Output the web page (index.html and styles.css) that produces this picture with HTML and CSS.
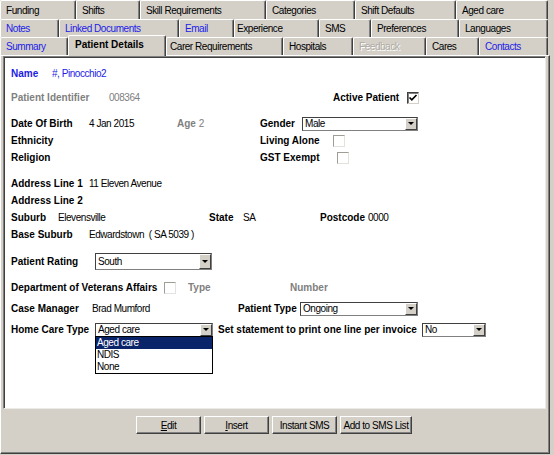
FILE: index.html
```html
<!DOCTYPE html>
<html>
	<head>
		<meta charset="UTF-8">
		<title>Patient Details</title>
		<link rel="stylesheet" href="styles.css">
	</head>
	<body>
		<div class="tabctl">
			<div class="tabrow first">
				<div class="tab t-funding">Funding</div>
				<div class="tab t-shifts">Shifts</div>
				<div class="tab t-skills">Skill Requirements</div>
				<div class="tab t-categories">Categories</div>
				<div class="tab t-shiftdef">Shift Defaults</div>
				<div class="tab t-aged">Aged care</div>
			</div>
			<div class="tabrow">
				<div class="tab link t-notes">Notes</div>
				<div class="tab link t-docs">Linked Documents</div>
				<div class="tab link t-email">Email</div>
				<div class="tab t-experience">Experience</div>
				<div class="tab t-sms">SMS</div>
				<div class="tab t-prefs">Preferences</div>
				<div class="tab t-langs">Languages</div>
			</div>
			<div class="tabrow">
				<div class="tab link t-summary">Summary</div>
				<div class="tab active t-details">Patient Details</div>
				<div class="tab t-carer">Carer Requirements</div>
				<div class="tab t-hospitals">Hospitals</div>
				<div class="tab off t-feedback">Feedback</div>
				<div class="tab t-cares">Cares</div>
				<div class="tab link t-contacts">Contacts</div>
			</div>

			<div class="page">
				<div class="sheet">
					<div class="row">
						<span class="lbl link w-name">Name</span>
						<span class="val link">#, Pinocchio2</span>
					</div>
					<div class="row r-pi">
						<span class="lbl dim w-pi">Patient Identifier</span>
						<span class="val dim w-pival">008364</span>
						<span class="lbl w-active">Active Patient</span>
						<span class="cb on">
							<svg width="10" height="10" viewBox="0 0 10 10"><polyline points="1.5,4.5 3.8,6.8 8.5,2" fill="none" stroke="#000" stroke-width="1.7"/></svg>
						</span>
					</div>
					<div class="row spaced">
						<span class="lbl w-key">Date Of Birth</span>
						<span class="val w-dob">4 Jan 2015</span>
						<span class="dim w-age"><b>Age</b> <span class="val">2</span></span>
						<span class="lbl w-gender">Gender</span>
						<div class="combo c-gender"><span class="combo-text">Male</span><span class="drop"></span></div>
					</div>
					<div class="row">
						<span class="lbl w-left">Ethnicity</span>
						<span class="lbl w-living">Living Alone</span>
						<span class="cb"></span>
					</div>
					<div class="row">
						<span class="lbl w-left">Religion</span>
						<span class="lbl w-gst">GST Exempt</span>
						<span class="cb"></span>
					</div>

					<div class="row spaced">
						<span class="lbl w-key">Address Line 1</span>
						<span class="val">11 Eleven Avenue</span>
					</div>
					<div class="row">
						<span class="lbl w-key">Address Line 2</span>
					</div>
					<div class="row">
						<span class="lbl w-suburb">Suburb</span>
						<span class="val w-subval">Elevensville</span>
						<span class="lbl w-state">State</span>
						<span class="val w-stateval">SA</span>
						<span class="lbl w-pc">Postcode</span>
						<span class="val">0000</span>
					</div>
					<div class="row">
						<span class="lbl w-key">Base Suburb</span>
						<span class="val">Edwardstown&nbsp; ( SA 5039 )</span>
					</div>

					<div class="row spaced tall">
						<span class="lbl w-key2">Patient Rating</span>
						<div class="combo c-rating"><span class="combo-text">South</span><span class="drop"></span></div>
					</div>
					<div class="row spaced">
						<span class="lbl w-dva">Department of Veterans Affairs</span>
						<span class="cb"></span>
						<span class="lbl dim w-type">Type</span>
						<span class="lbl dim">Number</span>
					</div>
					<div class="row near">
						<span class="lbl w-case">Case Manager</span>
						<span class="val w-caseval">Brad Mumford</span>
						<span class="lbl w-ptype">Patient Type</span>
						<div class="combo c-ptype"><span class="combo-text">Ongoing</span><span class="drop"></span></div>
					</div>
					<div class="row near">
						<span class="lbl w-key2">Home Care Type</span>
						<div class="combo c-home">
							<span class="combo-text">Aged care</span><span class="drop"></span>
							<ul class="droplist">
								<li class="sel">Aged care</li>
								<li>NDIS</li>
								<li>None</li>
							</ul>
						</div>
						<span class="lbl w-stmt">Set statement to print one line per invoice</span>
						<div class="combo c-stmt"><span class="combo-text">No</span><span class="drop"></span></div>
					</div>
				</div>

				<div class="buttons">
					<button class="btn"><u>E</u>dit</button>
					<button class="btn"><u>I</u>nsert</button>
					<button class="btn">Instant SMS</button>
					<button class="btn b-wide">Add to SMS List</button>
				</div>
			</div>
		</div>
	</body>
</html>
```

FILE: styles.css
```css
body {
	margin: 0;
	background: #d4d0c8;
	font-family: "Liberation Sans", Arial, sans-serif;
	font-size: 10px;
	color: #000;
}

.tabctl {
	width: 550px;
}

/* tab strip, three rows */
.tabrow {
	display: flex;
	height: 18px;
}
.tabrow.first {
	height: 19px;
}

.tab {
	box-sizing: border-box;
	flex: none;
	height: 100%;
	padding: 2px 0 0 5px;
	line-height: 14px;
	background: #d4d0c8;
	border-top: 1px solid #fff;
	border-left: 1px solid #fff;
	border-right: 1px solid #404040;
	box-shadow: inset -1px 0 0 #808080;
	border-radius: 2px 2px 0 0;
	letter-spacing: -0.45px;
	white-space: nowrap;
}
.tabrow.first .tab {
	padding-top: 3px;
}
.tab.link {
	color: #1c1ce6;
}
.tab.off {
	color: #aeaba4;
	text-shadow: 1px 1px 0 #fff;
}
.tab.active {
	position: relative;
	z-index: 1;
	height: 21px;
	margin-top: -2px;
	padding-left: 6px;
	font-weight: bold;
	letter-spacing: 0;
}

.t-funding { width: 76px; }
.t-shifts { width: 64px; }
.t-skills { width: 126px; }
.t-categories { width: 89px; }
.t-shiftdef { width: 101px; }
.t-aged { width: 92px; }

.t-notes { width: 59px; }
.t-docs { width: 120px; }
.t-email { width: 55px; }
.t-experience { width: 85px; padding-left: 2px; }
.t-sms { width: 52px; }
.t-prefs { width: 88px; }
.t-langs { width: 89px; }

.t-summary { width: 68px; }
.t-details { width: 98px; }
.t-carer { width: 117px; padding-left: 3px; }
.t-hospitals { width: 70px; }
.t-feedback { width: 73px; }
.t-cares { width: 53px; }
.t-contacts { width: 69px; }

/* page under the tabs */
.page {
	box-sizing: border-box;
	width: 550px;
	height: 399px;
	padding: 0 3px 0 2px;
	border-top: 1px solid #fff;
	border-left: 1px solid #fff;
	border-right: 1px solid #404040;
	border-bottom: 1px solid #404040;
	box-shadow: inset -1px -1px 0 #808080;
}

.sheet {
	box-sizing: border-box;
	height: 353px;
	padding: 8px 0 0 7px;
	background: #fff;
	border-top: 1px solid #808080;
	border-left: 1px solid #808080;
	border-right: 1px solid #ecebe7;
	border-bottom: 1px solid #ecebe7;
	box-shadow: inset 1px 1px 0 #404040;
}

/* form rows */
.row {
	display: flex;
	align-items: center;
	height: 17px;
	white-space: nowrap;
}
.row.r-pi {
	margin-top: 7px;
}
.row.spaced {
	margin-top: 9px;
}
.row.near {
	margin-top: 4px;
}
.row.tall {
	height: 18px;
}

.row > span,
.row > div {
	flex: none;
}

.lbl {
	font-weight: bold;
}
.val {
	letter-spacing: -0.45px;
}
.link {
	color: #1c1ce6;
}
.dim {
	color: #808080;
}

.w-name { width: 41px; }
.w-pi { width: 98px; }
.w-pival { width: 224px; }
.w-active { width: 74px; }
.w-key { width: 78px; }
.w-key2 { width: 84px; }
.w-dob { width: 88px; }
.w-age { width: 83px; }
.w-gender { width: 42px; }
.w-left { width: 249px; }
.w-living { width: 73px; }
.w-gst { width: 77px; }
.w-suburb { width: 47px; }
.w-subval { width: 151px; }
.w-state { width: 34px; }
.w-stateval { width: 77px; }
.w-pc { width: 48px; }
.w-dva { width: 153px; }
.w-type { width: 102px; margin-left: 12px; }
.w-case { width: 81px; }
.w-caseval { width: 146px; }
.w-ptype { width: 62px; }
.w-stmt { width: 204px; margin-left: 5px; }

/* checkboxes */
.cb {
	box-sizing: border-box;
	display: flex;
	align-items: center;
	justify-content: center;
	width: 12px;
	height: 12px;
	background: #fff;
	border-top: 1px solid #a09d96;
	border-left: 1px solid #a09d96;
	border-right: 1px solid #e4e2dc;
	border-bottom: 1px solid #e4e2dc;
}
.cb.on {
	border-color: #404040 #d4d0c8 #d4d0c8 #404040;
	box-shadow: inset 1px 1px 0 #808080;
}

/* combo boxes */
.combo {
	position: relative;
	box-sizing: border-box;
	display: flex;
	height: 14px;
	background: #fff;
	border: 1px solid #404040;
	border-right-color: #808080;
	border-bottom-color: #808080;
}
.combo-text {
	flex: 1;
	padding-left: 2px;
	line-height: 12px;
	letter-spacing: -0.45px;
}
.drop {
	box-sizing: border-box;
	width: 12px;
	display: flex;
	align-items: center;
	justify-content: center;
	background: #d4d0c8;
	border-top: 1px solid #fff;
	border-left: 1px solid #fff;
	border-right: 1px solid #404040;
	border-bottom: 1px solid #404040;
}
.drop::after {
	content: "";
	border-left: 3px solid transparent;
	border-right: 3px solid transparent;
	border-top: 3px solid #000;
}

.c-gender { width: 116px; }
.c-rating { width: 117px; height: 17px; }
.c-rating .combo-text { line-height: 15px; }
.c-ptype { width: 118px; }
.c-home { width: 118px; }
.c-stmt { width: 64px; }

.droplist {
	position: absolute;
	z-index: 2;
	top: 12px;
	left: -1px;
	right: -1px;
	margin: 0;
	padding: 0;
	list-style: none;
	background: #fff;
	border: 1px solid #000;
}
.droplist li {
	height: 12px;
	line-height: 12px;
	padding-left: 1px;
	letter-spacing: -0.45px;
}
.droplist li.sel {
	background: #0a246a;
	color: #fff;
}

/* button bar */
.buttons {
	display: flex;
	gap: 3px;
	margin-top: 7px;
	padding-left: 133px;
}
.btn {
	box-sizing: border-box;
	width: 65px;
	height: 18px;
	padding: 0;
	background: #d4d0c8;
	font: inherit;
	letter-spacing: -0.45px;
	color: #000;
	border: 1px solid;
	border-color: #fff #404040 #404040 #fff;
	box-shadow: inset -1px -1px 0 #808080;
}
.btn.b-wide {
	width: 72px;
}
```
